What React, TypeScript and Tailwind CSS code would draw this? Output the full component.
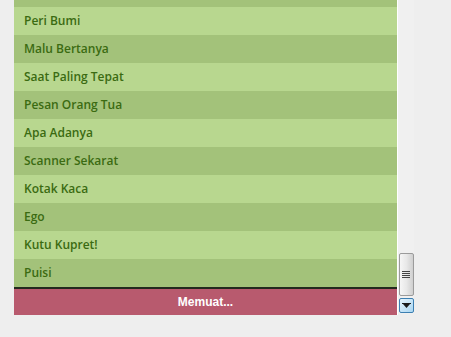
import React from 'react';

const songs = [
  'Peri Bumi',
  'Malu Bertanya',
  'Saat Paling Tepat',
  'Pesan Orang Tua',
  'Apa Adanya',
  'Scanner Sekarat',
  'Kotak Kaca',
  'Ego',
  'Kutu Kupret!',
  'Puisi',
];

export default function App() {
  return (
    <div className="w-[451px] h-[337px] bg-[#eeeeee] pl-[14px] flex items-start overflow-hidden">
      {/* list */}
      <div className="w-[383px] flex flex-col">
        <div className="h-[7px] bg-[#a3c27a]" />
        {songs.map((s, i) => (
          <div
            key={s}
            className={`h-[28px] flex items-center pl-[10px] text-[12px] font-semibold text-[#3b6b12] ${
              i % 2 === 0 ? 'bg-[#b8d78f]' : 'bg-[#a3c27a]'
            }`}
            style={{ fontFamily: '"Open Sans", sans-serif' }}
          >
            {s}
          </div>
        ))}
        <div className="h-[2px] bg-[#232a1e]" />
        <div
          className="h-[26px] bg-[#b85a6e] flex items-center justify-center text-white text-[12px] font-bold"
          style={{ fontFamily: '"Liberation Sans", Arial, sans-serif' }}
        >
          Memuat...
        </div>
      </div>
      {/* divider */}
      <div className="w-px h-[315px] bg-white" />
      {/* scrollbar */}
      <div className="w-[16px] h-[314px] bg-[#f0f0f0] flex flex-col justify-end items-center pb-px">
        <div className="w-[15px] h-[43px] rounded-[2px] border border-[#9b9b9b] bg-gradient-to-r from-[#f6f6f6] via-[#e8e8e8] to-[#cfcfcf] flex flex-col items-center justify-center gap-[1px]">
          <div className="w-[8px] h-px bg-[#444]" />
          <div className="w-[8px] h-px bg-[#444]" />
          <div className="w-[8px] h-px bg-[#444]" />
          <div className="w-[8px] h-px bg-[#444]" />
        </div>
        <div className="mt-[2px] w-[15px] h-[15px] rounded-[2px] border border-[#3c7fb1] bg-gradient-to-br from-[#e6f4fc] to-[#a9d6f2] flex items-center justify-center">
          <svg width="9" height="6" viewBox="0 0 9 6">
            <rect x="0" y="0" width="9" height="1" fill="#1b1b1b" />
            <polygon points="1,1 8,1 4.5,5" fill="#1b1b1b" />
          </svg>
        </div>
      </div>
    </div>
  );
}
